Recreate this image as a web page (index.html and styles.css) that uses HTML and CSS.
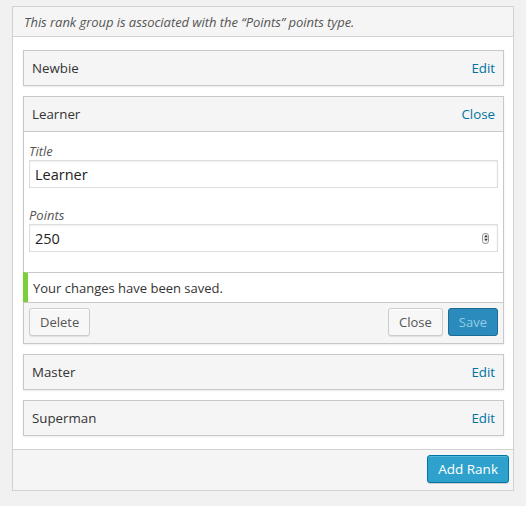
FILE: index.html
```html
<!DOCTYPE html>
<html>
<head>
<meta charset="utf-8">
<link rel="stylesheet" href="styles.css">
</head>
<body>
<div class="box">
  <div class="box-head">This rank group is associated with the “Points” points type.</div>
  <div class="box-body">
    <div class="rank">
      <div class="rank-head"><span class="rank-title">Newbie</span><a class="rank-link">Edit</a></div>
    </div>
    <div class="rank open">
      <div class="rank-head"><span class="rank-title">Learner</span><a class="rank-link">Close</a></div>
      <div class="rank-form">
        <div class="field">
          <div class="field-label">Title</div>
          <div class="field-input"><span>Learner</span></div>
        </div>
        <div class="field">
          <div class="field-label">Points</div>
          <div class="field-input"><span>250</span>
            <span class="spinner"><svg width="6" height="10" viewBox="0 0 6 10"><path d="M3 1.8 L4.8 4.3 H1.2 Z M3 8.2 L4.8 5.7 H1.2 Z" fill="#333"/></svg></span>
          </div>
        </div>
      </div>
      <div class="notice">Your changes have been saved.</div>
      <div class="rank-actions">
        <button class="btn">Delete</button>
        <div class="actions-right">
          <button class="btn">Close</button>
          <button class="btn btn-primary btn-disabled">Save</button>
        </div>
      </div>
    </div>
    <div class="rank">
      <div class="rank-head"><span class="rank-title">Master</span><a class="rank-link">Edit</a></div>
    </div>
    <div class="rank">
      <div class="rank-head"><span class="rank-title">Superman</span><a class="rank-link">Edit</a></div>
    </div>
  </div>
  <div class="box-foot">
    <button class="btn btn-primary btn-add">Add Rank</button>
  </div>
</div>
</body>
</html>
```

FILE: styles.css
```css
html, body {
  margin: 0;
  background: #f1f1f1;
}
body {
  padding: 6px 13px 0 12px;
  font-family: "Open Sans", "Liberation Sans", sans-serif;
  font-size: 13px;
  color: #444;
}
.box {
  width: 500px;
  border: 1px solid #d2d2d2;
  background: #fff;
  box-shadow: 0 1px 1px rgba(0,0,0,0.06);
}
.box-head {
  height: 29px;
  line-height: 31px;
  padding: 0 11px;
  background: #f5f5f5;
  border-bottom: 1px solid #d2d2d2;
  font-style: italic;
  color: #555;
  letter-spacing: -0.05px;
}
.box-body {
  padding: 13px 9px 13px 10px;
  display: flex;
  flex-direction: column;
  gap: 10px;
}
.rank {
  border: 1px solid #c8c8c8;
  background: #f5f5f5;
  box-shadow: 0 1px 2px rgba(0,0,0,0.08);
}
.rank-head {
  height: 34px;
  display: flex;
  align-items: center;
  justify-content: space-between;
  padding: 0 8px;
  box-sizing: border-box;
  font-size: 13.3px;
}
.rank-title {
  color: #333;
}
.rank-link {
  color: #0074a2;
}
.open .rank-head {
  height: 35px;
  border-bottom: 1px solid #c8c8c8;
}
.rank-form {
  background: #fff;
  padding: 10px 5px 20px;
  display: flex;
  flex-direction: column;
  gap: 18px;
}
.field-label {
  height: 18px;
  line-height: 18px;
  font-style: italic;
  color: #555;
}
.field-input {
  height: 26px;
  border: 1px solid #ddd;
  box-shadow: inset 0 1px 2px rgba(0,0,0,0.07);
  display: flex;
  align-items: center;
  justify-content: space-between;
  padding: 0 8px 0 5px;
  font-size: 14.5px;
  color: #222;
  background: #fff;
}
.spinner {
  width: 5px;
  height: 9px;
  border: 1px solid #999;
  border-radius: 3px;
  display: flex;
  align-items: center;
  justify-content: center;
  background: #f4f4f4;
}
.spinner svg {
  flex: none;
}
.notice {
  border-top: 1px solid #c8c8c8;
  border-left: 5px solid #7ad03a;
  margin-left: -1px;
  background: #fff;
  height: 29px;
  line-height: 30px;
  padding-left: 5px;
  font-size: 13px;
  color: #333;
}
.rank-actions {
  border-top: 1px solid #c8c8c8;
  height: 41px;
  padding: 5px 5px 6px;
  box-sizing: border-box;
  display: flex;
  justify-content: space-between;
  align-items: flex-start;
}
.actions-right {
  display: flex;
  gap: 5px;
}
.btn {
  font-family: inherit;
  font-size: 13px;
  height: 28px;
  line-height: 26px;
  padding: 0 10px 1px;
  margin: 0;
  border: 1px solid #ccc;
  border-radius: 3px;
  background: #f7f7f7;
  color: #555;
  box-shadow: inset 0 1px 0 #fff, 0 1px 0 rgba(0,0,0,0.08);
}
.btn-primary {
  background: #2ea2cc;
  border-color: #0074a2;
  color: #fff;
  box-shadow: inset 0 1px 0 rgba(120,200,230,0.5), 0 1px 0 rgba(0,0,0,0.15);
}
.btn-add {
  font-size: 13.5px;
}
.btn-disabled {
  background: #2a8bbc;
  border-color: #1b6b94;
  color: #94cde7;
  box-shadow: none;
}
.box-foot {
  border-top: 1px solid #d2d2d2;
  background: #f5f5f5;
  height: 41px;
  box-sizing: border-box;
  padding: 5px 4px 6px;
  display: flex;
  justify-content: flex-end;
  align-items: flex-start;
}
```
